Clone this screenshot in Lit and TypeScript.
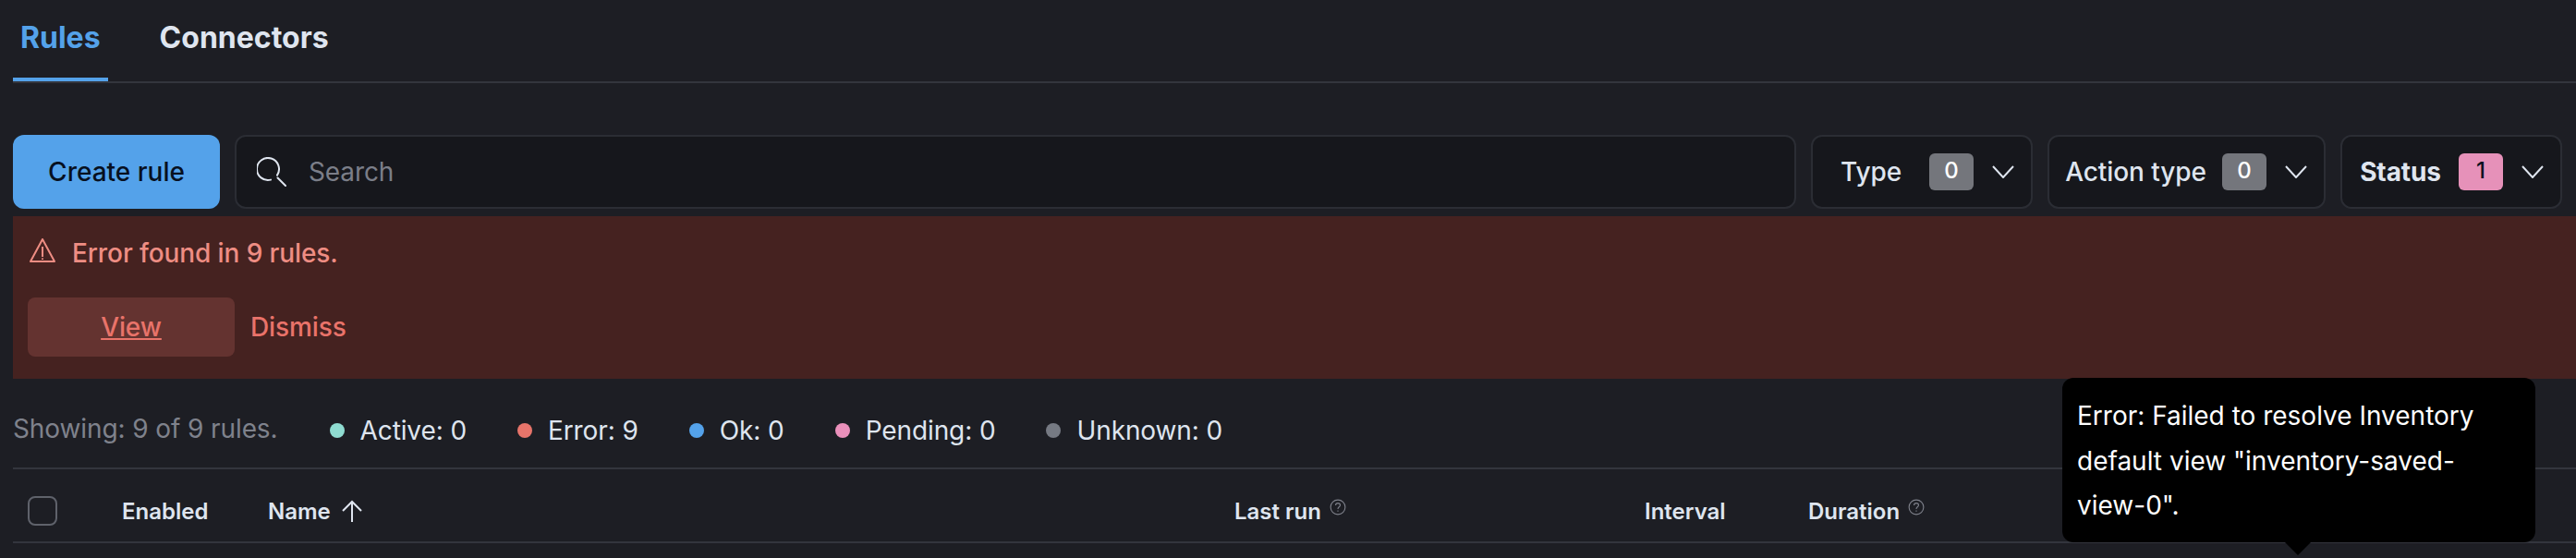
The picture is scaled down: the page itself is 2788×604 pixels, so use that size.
import { LitElement, html, css } from "lit";
import { customElement } from "lit/decorators.js";

const chevron = html`<svg class="chev" viewBox="0 0 24 14" fill="none" stroke="currentColor" stroke-width="2"><path d="M1 1l11 12L23 1" /></svg>`;
const help = html`<svg class="help" viewBox="0 0 16 16" fill="none" stroke="#7e808a" stroke-width="1"><circle cx="8" cy="8" r="7" /><path d="M5.800 6.200c0-1.300 1-2.100 2.200-2.100s2.200.8 2.200 2c0 1.700-2.200 1.700-2.200 3.600M8 11.200v1" /></svg>`;

const counts = [
  { label: "Active: 0", color: "#8fdcd1" },
  { label: "Error: 9", color: "#e7746a" },
  { label: "Ok: 0", color: "#54a2ea" },
  { label: "Pending: 0", color: "#ea90bb" },
  { label: "Unknown: 0", color: "#767a83" },
];

@customElement("app-root")
export class AppRoot extends LitElement {
  static styles = css`
    :host {
      display: block;
      position: relative;
      height: 604px;
      overflow: hidden;
      background: #1d1e24;
      color: #dfe5ef;
      font-family: Inter, "Liberation Sans", sans-serif;
      font-size: 28px;
      letter-spacing: -0.1px;
    }
    .tabs {
      display: flex;
      gap: 48px;
      height: 88px;
      margin-left: 14px;
      border-bottom: 2px solid #33353d;
      font-size: 32px;
      font-weight: 700;
      letter-spacing: 0;
    }
    .tab {
      padding: 21px 8px 0;
      box-sizing: border-box;
      height: 88px;
      line-height: 40px;
    }
    .tab.active {
      color: #54a2ea;
      border-bottom: 4px solid #54a2ea;
    }
    .toolbar {
      display: flex;
      gap: 16px;
      margin: 56px 15px 0 14px;
      height: 80px;
    }
    .create {
      width: 224px;
      border: none;
      border-radius: 12px;
      background: #54a2ea;
      color: #07101f;
      font: 500 28px Inter, sans-serif;
    }
    .search,
    .filter {
      display: flex;
      align-items: center;
      box-sizing: border-box;
      background: #16171c;
      border: 2px solid #2b2d34;
      border-radius: 12px;
    }
    .search {
      flex: 1;
      padding-left: 22px;
      color: #7b7e88;
    }
    .search svg {
      width: 32px;
      height: 32px;
      margin-right: 24px;
      color: #dfe5ef;
    }
    .filter {
      padding-right: 18px;
      font-weight: 500;
      height: 80px;
    }
    .filter.type {
      width: 240px;
    }
    .filter.action {
      width: 301px;
    }
    .filter.status {
      width: 240px;
      font-weight: 700;
    }
    .filter .label {
      flex: 1;
      text-align: center;
    }
    .filter .num {
      width: 48px;
      height: 40px;
      margin-right: 20px;
      border-radius: 6px;
      background: #74767c;
      color: #fff;
      font-size: 24px;
      font-weight: 500;
      line-height: 38px;
      text-align: center;
    }
    .filter.status .num {
      background: #e691b9;
      color: #07101f;
    }
    .chev {
      width: 24px;
      height: 14px;
    }
    .banner {
      box-sizing: border-box;
      height: 176px;
      margin: 8px 0 0 14px;
      padding: 22px 16px 0;
      background: #452220;
      color: #ee8d83;
    }
    .title {
      display: flex;
      align-items: center;
      gap: 18px;
      height: 36px;
      padding-left: 2px;
      font-weight: 500;
    }
    .title svg {
      width: 28px;
      height: 28px;
      margin-bottom: 4px;
    }
    .actions {
      display: flex;
      align-items: center;
      gap: 17px;
      margin-top: 30px;
      color: #e9736a;
      font-weight: 500;
    }
    .view {
      width: 224px;
      height: 64px;
      border-radius: 8px;
      background: #643330;
      line-height: 64px;
      text-align: center;
      text-decoration: underline;
    }
    .stats {
      display: flex;
      align-items: center;
      box-sizing: border-box;
      height: 98px;
      padding-top: 15px;
      margin-left: 14px;
      border-bottom: 2px solid #33353d;
    }
    .showing {
      margin-right: 56px;
      margin-top: -4px;
      color: #7f828c;
    }
    .stat {
      display: flex;
      align-items: center;
      gap: 17px;
      margin-right: 55px;
    }
    .dot {
      width: 16px;
      height: 16px;
      border-radius: 50%;
    }
    .head {
      display: grid;
      grid-template-columns: 118px 158px 1046px 444px 177px 1fr;
      align-items: center;
      box-sizing: border-box;
      height: 80px;
      padding-top: 12px;
      margin-left: 14px;
      border-bottom: 2px solid #33353d;
      font-size: 24px;
      font-weight: 600;
      letter-spacing: 0;
    }
    .check {
      width: 32px;
      height: 32px;
      margin-left: 16px;
      box-sizing: border-box;
      border: 2px solid #5f626b;
      border-radius: 8px;
    }
    .cell {
      display: flex;
      align-items: center;
      gap: 9px;
    }
    .arrow {
      width: 24px;
      height: 24px;
      margin-left: 2px;
    }
    .help {
      width: 18px;
      height: 18px;
      margin-bottom: 8px;
    }
    .tip {
      position: absolute;
      left: 2232px;
      top: 409px;
      box-sizing: border-box;
      width: 512px;
      height: 178px;
      padding: 17px 16px;
      background: #000;
      border-radius: 12px;
      color: #fff;
      letter-spacing: 0;
      line-height: 48.500px;
    }
    .tip::after {
      content: "";
      position: absolute;
      left: 241px;
      top: 178px;
      border: 14px solid transparent;
      border-top-color: #000;
      border-bottom: none;
    }
  `;

  render() {
    return html`
      <div class="tabs">
        <div class="tab active">Rules</div>
        <div class="tab">Connectors</div>
      </div>
      <div class="toolbar">
        <button class="create">Create rule</button>
        <div class="search">
          <svg viewBox="0 0 32 32" fill="none" stroke="currentColor" stroke-width="2" stroke-linecap="round">
            <path d="M15 24.600A12 12 0 1 1 22 19.600M22.500 22.500L31 31" />
          </svg>
          Search
        </div>
        <div class="filter type"><span class="label">Type</span><span class="num">0</span>${chevron}</div>
        <div class="filter action"><span class="label">Action type</span><span class="num">0</span>${chevron}</div>
        <div class="filter status"><span class="label">Status</span><span class="num">1</span>${chevron}</div>
      </div>
      <div class="banner">
        <div class="title">
          <svg viewBox="0 0 28 28" fill="none" stroke="currentColor" stroke-width="2" stroke-linejoin="round">
            <path d="M14 1L1 25h26zM14 9v11M14 21.500v1.500" />
          </svg>
          Error found in 9 rules.
        </div>
        <div class="actions">
          <div class="view">View</div>
          <div>Dismiss</div>
        </div>
      </div>
      <div class="stats">
        <div class="showing">Showing: 9 of 9 rules.</div>
        ${counts.map(
          (c) => html`<div class="stat">
            <span class="dot" style="background:${c.color}"></span>${c.label}
          </div>`
        )}
      </div>
      <div class="head">
        <div class="check"></div>
        <div>Enabled</div>
        <div class="cell">
          Name
          <svg class="arrow" viewBox="0 0 24 24" fill="none" stroke="currentColor" stroke-width="2">
            <path d="M12 24V2M2 12L12 2l10 10" />
          </svg>
        </div>
        <div class="cell">Last run ${help}</div>
        <div>Interval</div>
        <div class="cell">Duration ${help}</div>
      </div>
      <div class="tip">Error: Failed to resolve Inventory default view "inventory-saved-view-0".</div>
    `;
  }
}
